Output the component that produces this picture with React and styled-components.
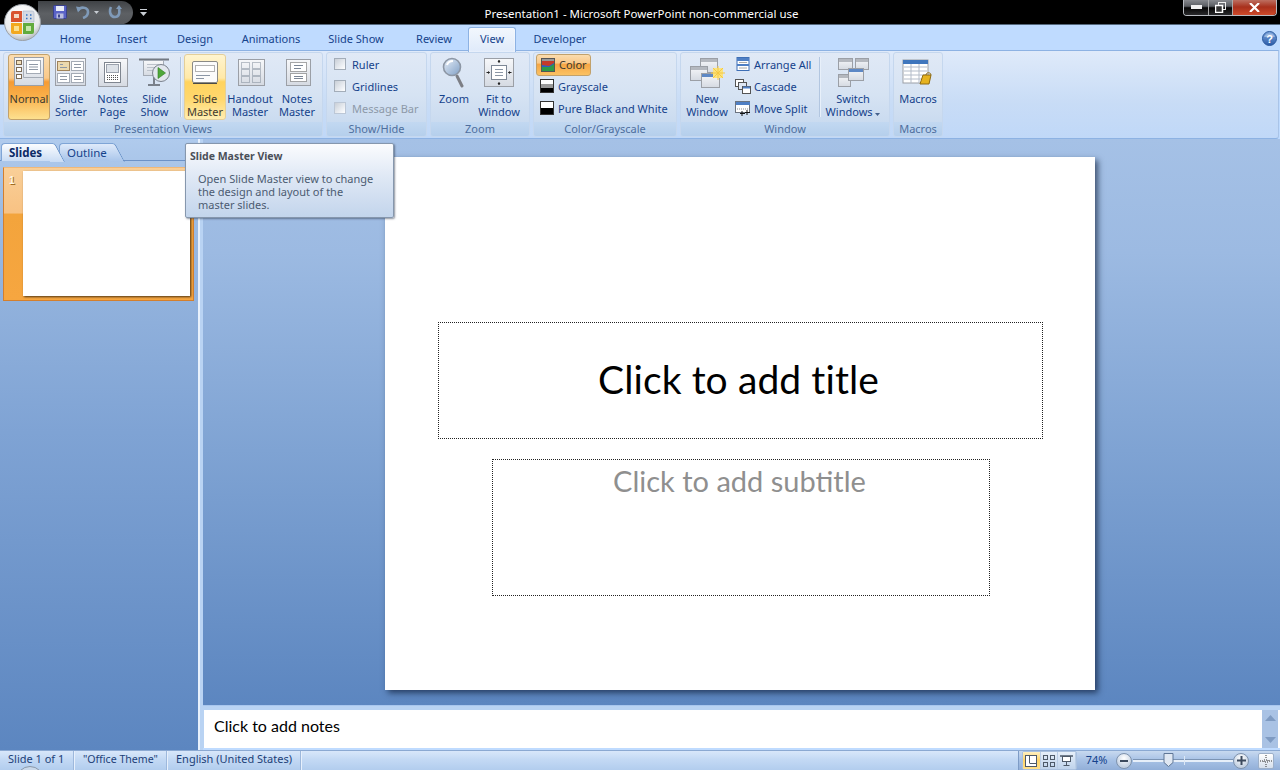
import React from 'react';
import styled, { createGlobalStyle } from 'styled-components';

const Global = createGlobalStyle`
  * { box-sizing: border-box; }
  html, body { margin: 0; padding: 0; background: #000; overflow: hidden; }
  #root { width: 1280px; height: 770px; }
`;
const UI = `"Noto Sans", "Open Sans", sans-serif`;
const Shell = styled.div`
  position: relative; width: 1280px; height: 770px; overflow: hidden; display: flex; flex-direction: column;
  font-family: ${UI}; font-size: 11px; color: #15428b; background: #bfdbff;
`;
const TitleBar = styled.div`
  position: relative; height: 25px; flex: none; display: flex; align-items: center; background: #000;
  border-bottom: 1px solid #55687c;
`;
const OfficeOrb = styled.div`position: absolute; left: 3px; top: 3px; width: 39px; height: 39px; z-index: 3;`;
const Qat = styled.div`
  margin-left: 38px; width: 95px; height: 23px; border-radius: 0 12px 12px 0; display: flex; align-items: center;
  padding-left: 15px; background: linear-gradient(#3f4246, #5d6064 55%, #55585c);
`;
const QatSlot = styled.div`margin-left: ${p => p.$ml ?? 0}px; display: flex;`;
const TitleText = styled.div`
  position: absolute; left: 3px; right: 0; top: 5px; text-align: center; color: #fff; font-size: 11.5px; line-height: 17px;
`;
const WinButtons = styled.div`
  position: absolute; right: 3px; top: -1px; width: 94px; height: 17px; display: flex; border: 1px solid #b8bcc2; border-top: 0;
  border-radius: 0 0 4px 4px; overflow: hidden;
`;
const WinBtn = styled.div`
  flex: ${p => p.$w ? `0 0 ${p.$w}px` : '1'}; display: flex; align-items: center; justify-content: center;
  background: ${p => p.$close ? 'linear-gradient(#c0786a, #a8301c 50%, #cf4a2a)' : 'linear-gradient(#8e9095, #5a5d62 45%, #050505 55%, #2a2a2c)'};
  border-right: ${p => p.$close ? '0' : '1px solid #aaa'};
`;
const Tabs = styled.div`
  position: relative; height: 25px; flex: none; display: flex; padding-left: 47px; background: #bfdbff;
`;
const Tab = styled.div`
  width: ${p => p.$w}px; height: 25px; text-align: center;
  font-size: 11px; line-height: 27px; color: #15428b; position: relative; z-index: 1;
  ${p => p.$on && `height: 25px; margin-top: 2px; line-height: 22px; background: linear-gradient(#f2f7fd, #dfeafa); border: 1px solid #8db2e3; border-bottom: 0; border-radius: 3px 3px 0 0; box-shadow: 0 0 2px #fff inset;`}
`;
const Help = styled.div`position: absolute; right: 3px; top: 6px; width: 15px; height: 15px;`;
const Ribbon = styled.div`
  height: 89px; flex: none; display: flex; gap: 3px; padding: 1px 2px 2px 3px; margin-right: 1px;
  border-top: 1px solid #8db2e3; border-right: 1px solid #a9c4e8; border-bottom: 1px solid #8db2e3;
  border-radius: 0 0 3px 0;
  background: linear-gradient(#dfeafa, #c8dcf6 60%, #c0d8f8);
`;
const Group = styled.div`
  width: ${p => p.$w}px; height: 85px; flex: none; display: flex; flex-direction: column; border-radius: 3px;
  border: 1px solid #c5d7ee; background: linear-gradient(#e0e9f6, #d6e3f3 50%, #c4d7ee); overflow: hidden;
`;
const GroupBody = styled.div`
  height: 69px; flex: none; display: flex; padding: 1px 0 0 ${p => p.$pad}px;
`;
const GroupLabel = styled.div`
  flex: 1; text-align: center; line-height: 14px; color: #4f6f9e; font-size: 11px; background: linear-gradient(#c2d8f1, #b5cfec);
`;
const Large = styled.div`
  width: ${p => p.$w}px; height: 66px; flex: none; display: flex; flex-direction: column; align-items: center; border-radius: 3px;
  padding-top: 3px; line-height: 13px; text-align: center; color: #15428b; white-space: nowrap;
  ${p => p.$state === 'on' && `background: linear-gradient(#fbdcae, #f9c98a 36%, #f69b34 42%, #f9b04a 65%, #fde08f); border: 1px solid #c2a16b; padding-top: 2px; color: #3f3a2f;`}
  ${p => p.$state === 'hover' && `background: linear-gradient(#fff4cf, #ffe9a8 36%, #ffd35e 42%, #ffd86f 70%, #ffedb0); border: 1px solid #e4cf99; padding-top: 2px;color: #3f3a2f;`}
`;
const LargeIcon = styled.div`height: 33px; margin-bottom: 3px; flex: none; display: flex; align-items: flex-start; justify-content: center;`;
const LargeText = styled.div`margin-top: -1px;`;
const Sep = styled.div`width: 1px; height: 60px; margin: 3px ${p => p.$r ?? 3}px 0 4px; flex: none; background: #b2c6e0; box-shadow: 1px 0 0 #e8f0fa;`;
const Col = styled.div`width: ${p => p.$w ? `${p.$w}px` : 'auto'}; flex: none; display: flex; flex-direction: column;`;
const Row = styled.div`
  height: 22px; display: flex; align-items: center; gap: ${p => p.$gap ?? 4}px; padding: 0 3px 2px ${p => p.$pad ?? 4}px; align-self: flex-start; white-space: nowrap;
  color: ${p => p.$dim ? '#8d99a8' : '#15428b'}; border-radius: 3px;
  ${p => p.$on && `background: linear-gradient(#fbdcae, #f9c98a 40%, #f6a544 46%, #fbc264); border: 1px solid #c2a16b; color: #3f3a2f; padding-left: 4px; padding-bottom: 1px;`}
`;
const Check = styled.div`
  width: 12px; height: 12px; flex: none; border: 1px solid ${p => p.$dim ? '#bcc7d6' : '#a3adb9'};
  background: linear-gradient(135deg, #c9cfd7, #eef1f5 70%, #fff);
`;
const Body = styled.div`flex: 1; min-height: 0; display: flex;`;
const LeftPane = styled.div`
  width: 198px; flex: none; display: flex; flex-direction: column; padding-top: 4px;
  background: linear-gradient(#b0cbed, #9dbbe2 12%, #7fa3d4 48%, #5c86c0 100%);
`;
const PaneTabs = styled.div`height: 18px; flex: none; display: flex; padding-left: 1px; border-bottom: 1px solid #6c92c8;`;
const PaneTab = styled.div`
  position: relative; width: ${p => p.$w}px; margin-right: ${p => p.$mr}px; height: 18px; z-index: ${p => p.$on ? 2 : 1}; padding-left: ${p => p.$pl}px; line-height: 17px; font-size: 11.5px;
  font-weight: ${p => p.$on ? 700 : 400}; color: ${p => p.$on ? '#0c2a66' : '#15428b'}; border-radius: 4px 0 0 0;
  border: 1px solid #7fa5d6; border-right: 0; border-bottom: 0;
  background: ${p => p.$on ? 'linear-gradient(#fbfdff, #c9dcf4)' : 'linear-gradient(#dfeafa, #a7c4ea)'};
  &::after {
    content: ''; position: absolute; right: -7px; top: -1px; width: 14px; height: 18px; border-top: 1px solid #7fa5d6; border-right: 1px solid #5f8ac2; border-radius: 0 3px 0 0;
    transform: skewX(28deg); background: inherit; z-index: -1;
  }
`;
const Thumb = styled.div`
  margin: 6px 0 0 3px; width: 191px; height: 134px; flex: none; display: flex; gap: 5px; padding: 3px 0 0 5px;
  border: 1px solid #d37f2e; border-top-color: #f0b878;
  background: linear-gradient(#f9cf98, #f8c283 34%, #f3a43c 35%, #f6a640);
`;
const ThumbNum = styled.div`
  width: 9px; font-family: "Liberation Sans", sans-serif; font-weight: 700; font-size: 10px; line-height: 12px; margin-top: 4px; color: #fff6e6; text-shadow: 1px 1px 0 #a06a20;
`;
const ThumbSlide = styled.div`width: 167px; height: 125px; background: #fff; box-shadow: 1px 1px 2px #4d3414;`;
const Split = styled.div`
  width: 5px; flex: none; background: #b9d3f3; border-left: 2px solid #e8f1fc;
`;
const MainCol = styled.div`flex: 1; min-width: 0; display: flex; flex-direction: column;`;
const Canvas = styled.div`
  height: 566px; flex: none; padding: 18px 0 0 182px; overflow: hidden;
  background: linear-gradient(#a5c1e6, #9cbae2 20%, #7fa3d3 55%, #5c86c0);
`;
const Slide = styled.div`
  width: 710px; height: 533px; background: #fff; box-shadow: 3px 3px 6px rgba(10, 25, 50, 0.65); display: flex; flex-direction: column;
  padding: 165px 0 0 53px; font-family: Lato, "Open Sans", sans-serif;
`;
const TitleBox = styled.div`
  width: 605px; height: 117px; flex: none; border: 1px dotted #222; display: flex; align-items: center; justify-content: center;
  font-size: 39px; color: #000; padding: 0 4px 4px 0; letter-spacing: 0.1px;
`;
const SubBox = styled.div`
  width: 498px; height: 137px; flex: none; margin: 20px 0 0 54px; border: 1px dotted #222; text-align: center; font-size: 29px; color: #8f8f8f; line-height: 42px; padding-right: 3px;
`;
const HSplit = styled.div`height: 5px; flex: none; background: #b9d3f3; border-top: 1px solid #a8c6ee;`;
const NotesRow = styled.div`height: 38px; flex: none; display: flex; background: #fff; padding-left: 1px; border-left: 1px solid #b9d3f3;`;
const NotesText = styled.div`flex: 1; font-family: Lato, sans-serif; font-size: 16px; line-height: 31px; color: #000; padding-left: 9px;`;
const Scroll = styled.div`width: 16px; margin-right: 2px; display: flex; flex-direction: column; justify-content: space-between; align-items: center; padding: 5px 0; background: #a9c2e4;`;
const BarGap = styled.div`height: 2px;`;
const Status = styled.div`
  height: 20px; flex: none; display: flex; align-items: center; position: relative; color: #15315e;
  border-top: 1px solid #8ba9d2; background: linear-gradient(#d8e7fa, #c3d9f4 45%, #b2cdee);
`;
const StatusCell = styled.div`
  width: ${p => p.$w}px; flex: none; height: 19px; padding-left: ${p => p.$pl}px; line-height: 16px; font-size: ${p => p.$fs ?? 11}px; border-right: 1px solid #9db8dc; box-shadow: 1px 0 0 #e7f0fc; color: #1d3f78;
`;
const StatusFill = styled.div`flex: 1;`;
const StatusRight = styled.div`
  width: 262px; height: 19px; flex: none; display: flex; align-items: center; padding-left: 3px; border-left: 1px solid #7e9cc6;
  background: linear-gradient(#c8d9ef, #a9c3e6 45%, #92afd8);
`;
const ViewBtns = styled.div`display: flex; height: 19px; width: 55px; flex: none; border: 1px solid #a9c0de; border-radius: 2px; overflow: hidden; background: linear-gradient(#e6eff9, #bfd3ec);`;
const ViewBtn = styled.div`
  flex: 1; display: flex; align-items: center; justify-content: center; border-right: 1px solid #b9cde6;
  ${p => p.$on && `background: linear-gradient(#fff0c0, #ffd466 50%, #ffdf8a);`}
`;
const Pct = styled.div`width: 39px; flex: none; text-align: center; font-size: 11px; line-height: 16px; padding-bottom: 2px; color: #15428b;`;
const RoundBtn = styled.div`
  width: 16px; height: 16px; flex: none; border-radius: 50%; border: 1px solid #7f93ad; background: radial-gradient(circle at 50% 30%, #fff, #c5d2e3 70%);
  display: flex; align-items: center; justify-content: center;
`;
const Track = styled.div`
  position: relative; width: 100px; height: 2px; margin: 0 0 0 1px; flex: none; background: #e7eff9; border-top: 1px solid #7c94b4; box-sizing: content-box;
`;
const Tick = styled.div`position: absolute; left: 51px; top: -4px; width: 1px; height: 9px; background: #dce7f5;`;
const Knob = styled.div`position: absolute; left: 30px; top: -7px; width: 11px; height: 14px;`;
const FitBtn = styled.div`margin-left: 9px; width: 16px; height: 16px; flex: none; display: flex; border: 1px solid #9db0c9; background: linear-gradient(#fff, #d5dfec); border-radius: 2px; align-items:center; justify-content:center;`;
const TaskOrb = styled.div`position: absolute; left: 16px; top: 766px; width: 28px; height: 28px; z-index: 4; border-radius: 50%; border: 1px solid #8b99aa; background: #c9d8ea;`;
const Tooltip = styled.div`
  position: absolute; left: 185px; top: 143px; width: 209px; height: 75px; padding: 5px 5px 0 4px; z-index: 10; border: 1px solid #8697ad; border-radius: 2px;
  background: linear-gradient(#fbfcfe, #dfe8f5 45%, #c3d5ec); box-shadow: 1px 1px 2px rgba(50,60,80,.55); color: #4c5b71; line-height: 13px;
`;
const TipTitle = styled.div`font-weight: 700; color: #4a4f58; line-height: 14px; font-size: 10.5px;`;
const TipBody = styled.div`margin: 9px 0 0 8px; white-space: pre-line;`;

const Defs = () => (
  <svg width="0" height="0" style={{ position: 'absolute' }}>
    <defs>
      <linearGradient id="fr" x1="0" y1="0" x2="0" y2="1"><stop offset="0" stopColor="#f7f8fa" /><stop offset="1" stopColor="#d5dae2" /></linearGradient>
      <linearGradient id="bl" x1="0" y1="0" x2="0" y2="1"><stop offset="0" stopColor="#7ea6dd" /><stop offset="1" stopColor="#2a5aa7" /></linearGradient>
      <linearGradient id="mg" x1="0" y1="0" x2="1" y2="1"><stop offset="0" stopColor="#e8eff8" /><stop offset="1" stopColor="#7f9fc6" /></linearGradient>
      <radialGradient id="orb" cx=".45" cy=".3" r=".75"><stop offset="0" stopColor="#ffffff" /><stop offset=".7" stopColor="#e8eaec" /><stop offset="1" stopColor="#a8adb2" /></radialGradient>
    </defs>
  </svg>
);
const S = ({ w = 32, h = 32, children }) => <svg width={w} height={h} viewBox={`0 0 ${w} ${h}`} fill="none">{children}</svg>;
const Frame = ({ x = 3, y = 1, w = 30, h = 29 }) => <rect x={x + .5} y={y + .5} width={w} height={h} fill="url(#fr)" stroke="#9b9fa6" />;
const Ln = ({ d, c = '#8f98a5', dash }) => <path d={d} stroke={c} strokeDasharray={dash} />;

const NormalIcon = () => <S w={34} h={32}><Frame x={2} y={0} w={29} h={28} />
  <path d="M11.500 20.500V1M11.500 20.500H31" stroke="#a4abb5" />
  <rect x="4.500" y="3.500" width="5" height="4" fill="#f2dfba" stroke="#7c6a55" /><rect x="4.500" y="10.500" width="5" height="4" fill="#fff" stroke="#7c6a55" /><rect x="4.500" y="17.500" width="5" height="4" fill="#fff" stroke="#7c6a55" />
  <rect x="14.500" y="3.500" width="14" height="13" fill="#fff" stroke="#a4abb5" /><Ln d="M17 7.500h9M17 10h9M17 12.500h9" /></S>;
const SorterIcon = () => <S w={32} h={30}><Frame x={0} y={1} w={30} h={27} />
  <rect x="2.500" y="4.500" width="12" height="9" fill="#ecd9ae" stroke="#a0835a" /><rect x="16.500" y="4.500" width="12" height="9" fill="#fff" stroke="#a4abb5" /><rect x="2.500" y="16.500" width="12" height="9" fill="#fff" stroke="#a4abb5" /><rect x="16.500" y="16.500" width="12" height="9" fill="#fff" stroke="#a4abb5" />
  <Ln d="M5 7.500h3M5 10.500h7M19 7.500h7M19 10.500h7M5 19.500h7M5 22.500h7M19 19.500h7M19 22.500h7" /></S>;
const NotesPageIcon = () => <S w={32} h={30}><Frame x={1} y={1} w={29} h={28} />
  <rect x="7.500" y="5.500" width="16" height="20" fill="#fff" stroke="#7f8690" /><rect x="9.500" y="7.500" width="12" height="8" fill="#dde2e8" stroke="#9ba2ad" /><Ln d="M10 18.500h11M10 20.500h11M10 22.500h11" dash="1 1" c="#555" /></S>;
const ShowIcon = () => <S w={32} h={32}><path d="M0 2.500h30" stroke="#737982" strokeWidth="2" /><rect x="4.500" y="3.500" width="20" height="15" fill="url(#fr)" stroke="#a4abb5" /><Ln d="M8 7.500h12M8 10.500h10M8 13.500h7" c="#bcc2cb" /><path d="M15 20v7M9 28h12" stroke="#7a818b" strokeWidth="2" /><circle cx="22" cy="16" r="8.500" fill="#e2e7ee" stroke="#7b828d" /><path d="M19 10.500l7.500 5.500-7.500 5.500z" fill="#4fa83a" stroke="#2f7a1e" strokeWidth=".6" /></S>;
const MasterIcon = () => <S w={32} h={30}><rect x="3.500" y="4.500" width="25" height="21" rx="1.500" fill="#fbfbfb" stroke="#8a8a86" /><path d="M4 26.500h24" stroke="#4a4a46" /><rect x="6.500" y="8.500" width="19" height="6" fill="#fff" stroke="#666" strokeDasharray="1 1" /><Ln d="M7 18.500h14M7 21.500h8" c="#8b96a5" /></S>;
const HandoutIcon = () => <S w={32} h={30}><Frame x={4} y={2} w={26} h={26} />
  <path d="M7.500 5.500h8v6h-8zM18.500 5.500h8v6h-8zM7.500 12.500h8v6h-8zM18.500 12.500h8v6h-8zM7.500 19.500h8v6h-8zM18.500 19.500h8v6h-8z" stroke="#7d8896" strokeDasharray="1 1" /></S>;
const NotesMasterIcon = () => <S w={32} h={30}><Frame x={5} y={2} w={24} h={26} /><rect x="9.500" y="5.500" width="16" height="9" fill="#fff" stroke="#555" strokeDasharray="1 1" /><Ln d="M13 8.500h9M13 11.500h7" c="#7b8696" /><rect x="9.500" y="16.500" width="16" height="8" fill="#fff" stroke="#555" strokeDasharray="1 1" /><Ln d="M13 19.500h9M13 21.500h9" c="#7b8696" /></S>;
const MagIcon = () => <S w={24} h={34}><path d="M15 19l5 10" stroke="#7d7f85" strokeWidth="3" strokeLinecap="round" /><circle cx="10" cy="10" r="8.500" fill="url(#mg)" stroke="#8d97a5" strokeWidth="1.600" /><path d="M5 8c1-3 4-4 6-4" stroke="#fff" strokeWidth="2" /></S>;
const FitIcon = () => <S w={32} h={32}><rect x="1.500" y="1.500" width="29" height="28" fill="url(#fr)" stroke="#9b9fa6" /><rect x="8.500" y="8.500" width="15" height="14" fill="#fff" stroke="#7d8795" /><Ln d="M12 12.500h8M12 15.500h8M12 18.500h8" c="#8b96a5" /><path d="M16 3v3M16 25v3M3.500 15.500h3M25.500 15.500h3" stroke="#222" /><path d="M14.500 5L16 3l1.500 2zM14.500 26l1.500 2 1.500-2zM5 14l2 1.500L5 17zM27 14l-2 1.500 2 1.500z" fill="#222" /></S>;
const ColorSw = () => <S w={14} h={14}><rect x=".5" y=".5" width="13" height="13" fill="#2a5fc2" stroke="#555" /><path d="M1 1h12v4L8 8 1 7z" fill="#c53a2a" /><path d="M1 9h7l5-3v7H1z" fill="#2e9a47" /><path d="M1 1h12v2H1z" fill="#999" /></S>;
const GraySw = () => <S w={14} h={14}><rect x=".5" y=".5" width="13" height="13" fill="#000" stroke="#333" /><rect x="1" y="1" width="12" height="4" fill="#fff" /><rect x="1" y="5" width="12" height="4" fill="#999" /></S>;
const BwSw = () => <S w={14} h={14}><rect x=".5" y=".5" width="13" height="13" fill="#000" stroke="#333" /><rect x="1" y="1" width="12" height="6" fill="#fff" /></S>;
const WinShape = ({ x, y, w, h, bar = '#b4b8bf' }) => <g><rect x={x + .5} y={y + .5} width={w} height={h} fill="url(#fr)" stroke="#9b9fa6" /><rect x={x + 1} y={y + 1} width={w - 1} height="3" fill={bar} /></g>;
const NewWinIcon = () => <S w={36} h={32}><WinShape x={11} y={1} w={17} h={14} /><WinShape x={1} y={9} w={17} h={14} /><WinShape x={12} y={16} w={18} h={14} bar="#5d88c5" /><rect x="24" y="11" width="10" height="10" fill="#fbe37e" /><path d="M29 9v14M22 16h14M24 11l10 10M34 11L24 21" stroke="#f5c842" /></S>;
const ArrangeIcon = () => <S w={14} h={14}><rect x="1" y=".5" width="12" height="13" fill="#fff" stroke="#3e6fb5" /><rect x="1" y="1" width="12" height="3" fill="#4f7fc4" /><rect x="1" y="7" width="12" height="2" fill="#4f7fc4" /><path d="M3 5.500h8M3 11h8" stroke="#aaa" /></S>;
const CascadeIcon = () => <S w={16} h={15}><rect x=".5" y=".5" width="8" height="7" fill="#fff" stroke="#555" /><rect x="3.500" y="3.500" width="8" height="7" fill="#dfe7f3" stroke="#555" /><rect x="7.500" y="7.500" width="8" height="7" fill="#fff" stroke="#555" /><path d="M8 8.500h7" stroke="#4f7fc4" strokeWidth="2" /></S>;
const SplitIcon = () => <S w={16} h={15}><rect x=".5" y=".5" width="14" height="11" fill="#fff" stroke="#6c7480" /><rect x="1" y="1" width="14" height="3" fill="#4f7fc4" /><path d="M2 8h11" stroke="#888" strokeDasharray="1 1" /><path d="M7 10v5M5 12.500h5M12 9v5M10 11.500h5" stroke="#111" /></S>;
const SwitchIcon = () => <S w={32} h={32}><WinShape x={1} y={1} w={14} h={11} /><WinShape x={18} y={1} w={13} h={11} /><WinShape x={1} y={17} w={12} h={12} /><WinShape x={11} y={11} w={15} h={12} bar="#5d88c5" /></S>;
const MacroIcon = () => <S w={32} h={32}><rect x="1" y="3" width="25" height="23" fill="#fff" stroke="#9b9fa6" /><rect x="1" y="3" width="25" height="4" fill="#3f76bd" /><path d="M2 10h23M2 14h23M2 18h23M2 22h23M9 7v19M17 7v19" stroke="#b3bcc9" /><path d="M21 18h8l-2 9h-9z" fill="#e6b31f" stroke="#8f6a10" /><path d="M24 18c0-3 5-3 5 0" stroke="#8f6a10" /></S>;

const Logo = () => <svg width="39" height="39" viewBox="0 0 39 39"><circle cx="19.500" cy="19.500" r="18" fill="url(#orb)" stroke="#9aa0a7" />
  <path d="M8 10a2 2 0 012-2h9v11H8z" fill="#d9532f" /><path d="M11 11h5v4h-5z" fill="#f3d9c4" />
  <path d="M20 8h9a2 2 0 012 2v9H20z" fill="#d6dbe3" stroke="#a5b3c8" strokeWidth=".6" /><path d="M23 12h1.500M27 12h1.500M23 15.500h1.500M27 15.500h1.500" stroke="#3273c4" strokeWidth="1.600" />
  <path d="M8 20h11v11h-9a2 2 0 01-2-2z" fill="#f2a81f" /><path d="M11 23h5v5h-5z" fill="#fbe08e" />
  <path d="M20 20h11v9a2 2 0 01-2 2h-9z" fill="#62ab3d" /><path d="M23 23h5v5h-5z" fill="#c5e6a8" /></svg>;
const Save = () => <svg width="14" height="14" viewBox="0 0 14 14"><rect x=".5" y=".5" width="13" height="13" rx="1" fill="#5a63c7" stroke="#39408c" /><rect x="3" y="1" width="8" height="5" fill="#e8ebf7" /><rect x="3.500" y="8.500" width="7" height="5" fill="#b9bee0" /><rect x="5" y="9.500" width="2" height="3" fill="#3c4490" /></svg>;
const Undo = () => <svg width="14" height="14" viewBox="0 0 14 14" fill="none"><path d="M2 5.500C4 1.500 12 1.500 12 7c0 3-2 5-5 6" stroke="#7f9ab8" strokeWidth="2.600" /><path d="M0 1.500l6 1-4 5z" fill="#7f9ab8" /></svg>;
const Redo = () => <svg width="14" height="14" viewBox="0 0 14 14" fill="none"><path d="M3 2C1 6 2 12 7 12c4 0 5-4 4-8" stroke="#7f9ab8" strokeWidth="2.600" /><path d="M8 4h6L11 0z" fill="#7f9ab8" /></svg>;
const Caret = ({ c = '#c8cdd3' }) => <svg width="5" height="3" viewBox="0 0 5 3"><path d="M0 0h5L2.500 3z" fill={c} /></svg>;
const QatDrop = () => <svg width="7" height="8" viewBox="0 0 7 8"><path d="M0 1.500h7" stroke="#c8cdd3" /><path d="M0 4h7L3.500 8z" fill="#c8cdd3" /></svg>;
const HelpIcon = () => <svg width="15" height="15" viewBox="0 0 15 15"><circle cx="7.500" cy="7.500" r="7" fill="url(#bl)" stroke="#2b5a9e" /><path d="M2 6a6 6 0 0111 0z" fill="#fff" opacity=".35" /><text x="7.500" y="11.500" textAnchor="middle" fontSize="11" fontWeight="700" fontFamily="Liberation Sans" fill="#fff">?</text></svg>;

const ViewA = () => <svg width="12" height="12" viewBox="0 0 12 12" fill="none"><rect x=".5" y=".5" width="11" height="11" fill="#fff" stroke="#4d5968" /><path d="M4.500 1v7M4.500 8.500H11" stroke="#4d5968" /></svg>;
const ViewB = () => <svg width="12" height="12" viewBox="0 0 12 12" fill="none"><rect x=".5" y=".5" width="4" height="4" stroke="#4d5968" /><rect x="7.500" y=".5" width="4" height="4" stroke="#4d5968" /><rect x=".5" y="7.500" width="4" height="4" stroke="#4d5968" /><rect x="7.500" y="7.500" width="4" height="4" stroke="#4d5968" /></svg>;
const ViewC = () => <svg width="13" height="12" viewBox="0 0 13 12" fill="none"><path d="M0 1h13" stroke="#4d5968" strokeWidth="1.500" /><rect x="2.500" y="1.500" width="8" height="5" fill="#fff" stroke="#4d5968" /><path d="M6.500 7v3M3.500 10.500h6" stroke="#4d5968" /></svg>;

export default function App() {
  return (
    <Shell>
      <Global />
      <Defs />
      <TitleBar>
        <Qat>
          <Save />
          <QatSlot $ml={9}><Undo /></QatSlot>
          <QatSlot $ml={4}><Caret /></QatSlot>
          <QatSlot $ml={9}><Redo /></QatSlot>
        </Qat>
        <QatSlot $ml={7}><QatDrop /></QatSlot>
        <TitleText>Presentation1 - Microsoft PowerPoint non-commercial use</TitleText>
        <WinButtons>
          <WinBtn $w={25}><svg width="11" height="4"><rect width="11" height="4" fill="#f1f1f1" /></svg></WinBtn>
          <WinBtn $w={24}><svg width="11" height="11" viewBox="0 0 11 11" fill="none"><rect x="3.500" y=".5" width="7" height="7" stroke="#eee" /><rect x=".5" y="3.500" width="7" height="7" fill="#333" stroke="#fff" strokeWidth="1.500" /></svg></WinBtn>
          <WinBtn $close><svg width="11" height="9" viewBox="0 0 11 9"><path d="M1 0l4.500 4.500L10 0M1 9l4.500-4.500L10 9" stroke="#fff" strokeWidth="2.200" fill="none" /></svg></WinBtn>
        </WinButtons>
      </TitleBar>
      <OfficeOrb><Logo /></OfficeOrb>
      <Tabs>
        <Tab $w={57}>Home</Tab><Tab $w={56}>Insert</Tab><Tab $w={70}>Design</Tab><Tab $w={82}>Animations</Tab>
        <Tab $w={88}>Slide Show</Tab><Tab $w={68}>Review</Tab><Tab $w={48} $on>View</Tab><Tab $w={88}>Developer</Tab>
        <Help><HelpIcon /></Help>
      </Tabs>
      <Ribbon>
        <Group $w={320}>
          <GroupBody $pad={4}>
            <Large $w={42} $state="on"><LargeIcon><NormalIcon /></LargeIcon><LargeText>Normal</LargeText></Large>
            <Large $w={42}><LargeIcon><SorterIcon /></LargeIcon><LargeText>Slide<br />Sorter</LargeText></Large>
            <Large $w={41}><LargeIcon><NotesPageIcon /></LargeIcon><LargeText>Notes<br />Page</LargeText></Large>
            <Large $w={43}><LargeIcon><ShowIcon /></LargeIcon><LargeText>Slide<br />Show</LargeText></Large>
            <Sep />
            <Large $w={42} $state="hover"><LargeIcon><MasterIcon /></LargeIcon><LargeText>Slide<br />Master</LargeText></Large>
            <Large $w={48}><LargeIcon><HandoutIcon /></LargeIcon><LargeText>Handout<br />Master</LargeText></Large>
            <Large $w={46}><LargeIcon><NotesMasterIcon /></LargeIcon><LargeText>Notes<br />Master</LargeText></Large>
          </GroupBody>
          <GroupLabel>Presentation Views</GroupLabel>
        </Group>
        <Group $w={101}>
          <GroupBody $pad={2}>
            <Col>
              <Row $gap={6} $pad={5}><Check />Ruler</Row>
              <Row $gap={6} $pad={5}><Check />Gridlines</Row>
              <Row $gap={6} $pad={5} $dim><Check $dim />Message Bar</Row>
            </Col>
          </GroupBody>
          <GroupLabel>Show/Hide</GroupLabel>
        </Group>
        <Group $w={100}>
          <GroupBody $pad={3}>
            <Large $w={40}><LargeIcon><MagIcon /></LargeIcon><LargeText>Zoom</LargeText></Large>
            <Large $w={50}><LargeIcon><FitIcon /></LargeIcon><LargeText>Fit to<br />Window</LargeText></Large>
          </GroupBody>
          <GroupLabel>Zoom</GroupLabel>
        </Group>
        <Group $w={144}>
          <GroupBody $pad={2}>
            <Col>
              <Row $on><ColorSw />Color</Row>
              <Row $pad={4}><GraySw />Grayscale</Row>
              <Row $pad={4}><BwSw />Pure Black and White</Row>
            </Col>
          </GroupBody>
          <GroupLabel>Color/Grayscale</GroupLabel>
        </Group>
        <Group $w={210}>
          <GroupBody $pad={4}>
            <Large $w={44}><LargeIcon><NewWinIcon /></LargeIcon><LargeText>New<br />Window</LargeText></Large>
            <Col $w={86}>
              <Row $pad={7}><ArrangeIcon />Arrange All</Row>
              <Row $gap={3} $pad={6}><CascadeIcon />Cascade</Row>
              <Row $gap={3} $pad={6}><SplitIcon />Move Split</Row>
            </Col>
            <Sep />
            <Large $w={60}><LargeIcon><SwitchIcon /></LargeIcon><LargeText>Switch<br />Windows <Caret c="#45618c" /></LargeText></Large>
          </GroupBody>
          <GroupLabel>Window</GroupLabel>
        </Group>
        <Group $w={50}>
          <GroupBody $pad={2}>
            <Large $w={44}><LargeIcon><MacroIcon /></LargeIcon><LargeText>Macros</LargeText></Large>
          </GroupBody>
          <GroupLabel>Macros</GroupLabel>
        </Group>
      </Ribbon>
      <Body>
        <LeftPane>
          <PaneTabs>
            <PaneTab $w={52} $mr={6} $pl={7} $on>Slides</PaneTab>
            <PaneTab $w={54} $mr={0} $pl={7}>Outline</PaneTab>
          </PaneTabs>
          <Thumb>
            <ThumbNum>1</ThumbNum>
            <ThumbSlide />
          </Thumb>
        </LeftPane>
        <Split />
        <MainCol>
          <Canvas>
            <Slide>
              <TitleBox>Click to add title</TitleBox>
              <SubBox>Click to add subtitle</SubBox>
            </Slide>
          </Canvas>
          <HSplit />
          <NotesRow>
            <NotesText>Click to add notes</NotesText>
            <Scroll>
              <svg width="11" height="6"><path d="M0 6L5.500 0 11 6z" fill="#7f9bc2" /></svg>
              <svg width="11" height="6"><path d="M0 0l5.500 6L11 0z" fill="#7f9bc2" /></svg>
            </Scroll>
          </NotesRow>
          <BarGap />
        </MainCol>
      </Body>
      <Status>
        <StatusCell $w={74} $pl={8}>Slide 1 of 1</StatusCell>
        <StatusCell $w={93} $pl={9} $fs={10.6}>"Office Theme"</StatusCell>
        <StatusCell $w={134} $pl={9}>English (United States)</StatusCell>
        <StatusFill />
        <StatusRight>
          <ViewBtns>
            <ViewBtn $on><ViewA /></ViewBtn><ViewBtn><ViewB /></ViewBtn><ViewBtn><ViewC /></ViewBtn>
          </ViewBtns>
          <Pct>74%</Pct>
          <RoundBtn><svg width="8" height="2"><rect width="8" height="2" fill="#3c4a5e" /></svg></RoundBtn>
          <Track>
            <Tick />
            <Knob><svg width="11" height="14" viewBox="0 0 11 14"><path d="M1 .5h9v9l-4.500 4-4.500-4z" fill="#dfe7f2" stroke="#5f7696" /></svg></Knob>
          </Track>
          <RoundBtn><svg width="9" height="9"><path d="M0 3.500h9v2H0zM3.500 0h2v9h-2z" fill="#3c4a5e" /></svg></RoundBtn>
          <FitBtn><svg width="12" height="12" viewBox="0 0 12 12"><path d="M6 0v3M6 9v3M0 6h3M9 6h3M4 5h4v2H4z" stroke="#333" strokeDasharray="1 1" fill="none" /></svg></FitBtn>
        </StatusRight>
      </Status>
      <TaskOrb />
      <Tooltip>
        <TipTitle>Slide Master View</TipTitle>
        <TipBody>{`Open Slide Master view to change
the design and layout of the
master slides.`}</TipBody>
      </Tooltip>
    </Shell>
  );
}
